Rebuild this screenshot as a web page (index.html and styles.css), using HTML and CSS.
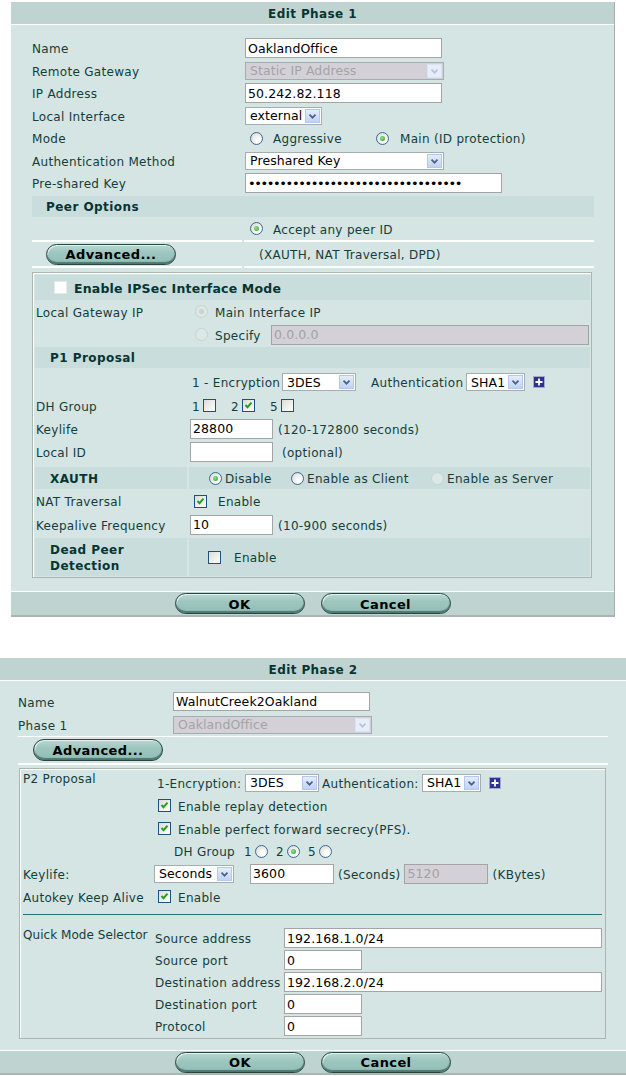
FILE: index.html
```html
<!DOCTYPE html>
<html lang="en">
<head>
    <meta charset="UTF-8">
    <meta name="viewport" content="width=device-width, initial-scale=1.0">
    <title>Auto Key (IKE)</title>
    <link rel="stylesheet" href="styles.css">
</head>
<body>
    <!-- Phase 1 -->
    <div class="panel phase1">
        <div class="panel-title">Edit Phase 1</div>
        <div class="panel-body">
            <div class="row">
                <span class="label">Name</span>
                <div class="cell"><input class="text w197" value="OaklandOffice" readonly></div>
            </div>
            <div class="row">
                <span class="label">Remote Gateway</span>
                <div class="cell">
                    <span class="select off w199"><span class="val">Static IP Address</span><span class="drop"><svg viewBox="0 0 15 14"><path d="M4 5.5l3.5 3.5 3.5-3.5"/></svg></span></span>
                </div>
            </div>
            <div class="row">
                <span class="label">IP Address</span>
                <div class="cell"><input class="text w197" value="50.242.82.118" readonly></div>
            </div>
            <div class="row">
                <span class="label">Local Interface</span>
                <div class="cell">
                    <span class="select w77"><span class="val">external</span><span class="drop"><svg viewBox="0 0 15 14"><path d="M4 5.5l3.5 3.5 3.5-3.5"/></svg></span></span>
                </div>
            </div>
            <div class="row">
                <span class="label">Mode</span>
                <div class="cell mode">
                    <span class="opt first"><span class="radio"></span><span class="txt">Aggressive</span></span>
                    <span class="opt"><span class="radio on"></span><span class="txt">Main (ID protection)</span></span>
                </div>
            </div>
            <div class="row">
                <span class="label">Authentication Method</span>
                <div class="cell">
                    <span class="select w199"><span class="val">Preshared Key</span><span class="drop"><svg viewBox="0 0 15 14"><path d="M4 5.5l3.5 3.5 3.5-3.5"/></svg></span></span>
                </div>
            </div>
            <div class="row">
                <span class="label">Pre-shared Key</span>
                <div class="cell"><input class="text w257 psk" type="password" value="oaklandofficepresharedkey123456789" readonly></div>
            </div>

            <div class="bar peer-bar">Peer Options</div>
            <div class="pair accept">
                <div></div>
                <div class="cell"><span class="radio on"></span><span class="txt">Accept any peer ID</span></div>
            </div>
            <div class="pair adv-row">
                <div class="cell"><button class="btn">Advanced...</button></div>
                <div class="cell hint"><span class="txt">(XAUTH, NAT Traversal, DPD)</span></div>
            </div>

            <div class="adv-box">
                <div class="bar big"><span class="check blank"></span>Enable IPSec Interface Mode</div>
                <div class="brow h23">
                    <span class="label">Local Gateway IP</span>
                    <div class="cell gw"><span class="radio off on"></span><span class="txt">Main Interface IP</span></div>
                </div>
                <div class="brow h23">
                    <span></span>
                    <div class="cell gw"><span class="radio off"></span><span class="spec txt">Specify</span><input class="text off w318" value="0.0.0.0" readonly></div>
                </div>
                <div class="bar p1-bar">P1 Proposal</div>
                <div class="brow enc">
                    <span></span>
                    <div class="cell">
                        <span class="enc-label txt">1 - Encryption</span>
                        <span class="select w74"><span class="val">3DES</span><span class="drop"><svg viewBox="0 0 15 14"><path d="M4 5.5l3.5 3.5 3.5-3.5"/></svg></span></span>
                        <span class="auth-label txt">Authentication</span>
                        <span class="select w59"><span class="val">SHA1</span><span class="drop"><svg viewBox="0 0 15 14"><path d="M4 5.5l3.5 3.5 3.5-3.5"/></svg></span></span>
                        <svg class="plus" viewBox="0 0 12 12"><rect x="0.5" y="0.5" width="11" height="11"/><path d="M6 2.5v7M2.5 6h7"/></svg>
                    </div>
                </div>
                <div class="brow h23">
                    <span class="label">DH Group</span>
                    <div class="cell dh">
                        <span class="num">1</span><span class="check"></span>
                        <span class="num">2</span><span class="check on"><svg viewBox="0 0 11 11"><path d="M2.5 5l2 2.2 4-4.5"/></svg></span>
                        <span class="num">5</span><span class="check"></span>
                    </div>
                </div>
                <div class="brow h23">
                    <span class="label">Keylife</span>
                    <div class="cell inp"><input class="text w83" value="28800" readonly><span class="note txt">(120-172800 seconds)</span></div>
                </div>
                <div class="brow h24">
                    <span class="label">Local ID</span>
                    <div class="cell inp"><input class="text w83" value="" readonly><span class="note wide txt">(optional)</span></div>
                </div>
                <div class="brow split xauth">
                    <div class="bar-cell">XAUTH</div>
                    <div class="bar-cell opts">
                        <span class="opt x1"><span class="radio on"></span><span class="txt">Disable</span></span>
                        <span class="opt x2"><span class="radio"></span><span class="txt">Enable as Client</span></span>
                        <span class="opt"><span class="radio off"></span><span class="txt">Enable as Server</span></span>
                    </div>
                </div>
                <div class="brow h24">
                    <span class="label">NAT Traversal</span>
                    <div class="cell nat"><span class="check on"><svg viewBox="0 0 11 11"><path d="M2.5 5l2 2.2 4-4.5"/></svg></span><span class="txt">Enable</span></div>
                </div>
                <div class="brow h23">
                    <span class="label">Keepalive Frequency</span>
                    <div class="cell inp"><input class="text w83" value="10" readonly><span class="note txt">(10-900 seconds)</span></div>
                </div>
                <div class="brow split dpd">
                    <div class="bar-cell">Dead Peer<br>Detection</div>
                    <div class="bar-cell dpd-opt"><span class="check"></span><span class="txt">Enable</span></div>
                </div>
            </div>
        </div>
        <div class="panel-foot">
            <button class="btn">OK</button>
            <button class="btn">Cancel</button>
        </div>
    </div>

    <!-- Phase 2 -->
    <div class="panel phase2">
        <div class="panel-title">Edit Phase 2</div>
        <div class="panel-body">
            <div class="row2">
                <span class="label">Name</span>
                <div class="cell"><input class="text w197 h19" value="WalnutCreek2Oakland" readonly></div>
            </div>
            <div class="row2 last">
                <span class="label">Phase 1</span>
                <div class="cell">
                    <span class="select off w199"><span class="val">OaklandOffice</span><span class="drop"><svg viewBox="0 0 15 14"><path d="M4 5.5l3.5 3.5 3.5-3.5"/></svg></span></span>
                </div>
            </div>
            <div class="adv-row2">
                <button class="btn tall">Advanced...</button>
            </div>

            <div class="adv-box box2">
                <div class="irow">
                    <span class="label top">P2 Proposal</span>
                    <div class="cell">
                        <span class="enc-label2 txt">1-Encryption:</span>
                        <span class="select w74"><span class="val">3DES</span><span class="drop"><svg viewBox="0 0 15 14"><path d="M4 5.5l3.5 3.5 3.5-3.5"/></svg></span></span>
                        <span class="auth-label2 txt">Authentication:</span>
                        <span class="select w59"><span class="val">SHA1</span><span class="drop"><svg viewBox="0 0 15 14"><path d="M4 5.5l3.5 3.5 3.5-3.5"/></svg></span></span>
                        <svg class="plus" viewBox="0 0 12 12"><rect x="0.5" y="0.5" width="11" height="11"/><path d="M6 2.5v7M2.5 6h7"/></svg>
                    </div>
                </div>
                <div class="irow">
                    <span></span>
                    <div class="cell chk"><span class="check on"><svg viewBox="0 0 11 11"><path d="M2.5 5l2 2.2 4-4.5"/></svg></span><span class="txt">Enable replay detection</span></div>
                </div>
                <div class="irow">
                    <span></span>
                    <div class="cell chk"><span class="check on"><svg viewBox="0 0 11 11"><path d="M2.5 5l2 2.2 4-4.5"/></svg></span><span class="txt">Enable perfect forward secrecy(PFS).</span></div>
                </div>
                <div class="irow h22">
                    <span></span>
                    <div class="cell dh2">
                        <span class="dh-label">DH Group</span>
                        <span class="num">1</span><span class="radio"></span>
                        <span class="num">2</span><span class="radio on"></span>
                        <span class="num">5</span><span class="radio"></span>
                    </div>
                </div>
                <div class="irow">
                    <span class="label">Keylife:</span>
                    <div class="cell">
                        <span class="select w80"><span class="val">Seconds</span><span class="drop"><svg viewBox="0 0 15 14"><path d="M4 5.5l3.5 3.5 3.5-3.5"/></svg></span></span>
                        <input class="text w84 gap16" value="3600" readonly>
                        <span class="unit txt">(Seconds)</span>
                        <input class="text off w84" value="5120" readonly>
                        <span class="unit txt">(KBytes)</span>
                    </div>
                </div>
                <div class="irow">
                    <span class="label">Autokey Keep Alive</span>
                    <div class="cell chk"><span class="check on"><svg viewBox="0 0 11 11"><path d="M2.5 5l2 2.2 4-4.5"/></svg></span><span class="txt">Enable</span></div>
                </div>
                <div class="rule"></div>
                <div class="irow qms">
                    <span class="label top">Quick Mode Selector</span>
                    <div class="qgrid">
                        <span>Source address</span><div class="cell"><input class="text w318" value="192.168.1.0/24" readonly></div>
                        <span>Source port</span><div class="cell"><input class="text w78" value="0" readonly></div>
                        <span>Destination address</span><div class="cell"><input class="text w318" value="192.168.2.0/24" readonly></div>
                        <span>Destination port</span><div class="cell"><input class="text w78" value="0" readonly></div>
                        <span>Protocol</span><div class="cell"><input class="text w78" value="0" readonly></div>
                    </div>
                </div>
            </div>
        </div>
        <div class="panel-foot short">
            <button class="btn">OK</button>
            <button class="btn">Cancel</button>
        </div>
    </div>
</body>
</html>
```

FILE: styles.css
```css
* {
    box-sizing: border-box;
}

body {
    margin: 0;
    padding-top: 2px;
    font-family: "DejaVu Sans", Verdana, sans-serif;
    font-size: 12px;
    letter-spacing: 0.3px;
    color: #143d3c;
    background: #fff;
}

/* panels */
.panel {
    background: #d5e5e3;
}

.phase1 {
    width: 604px;
    margin-left: 11px;
    border-right: 1px solid #a3afab;
}

.phase2 {
    width: 626px;
    margin-top: 41px;
}

.panel-title {
    height: 23px;
    line-height: 24px;
    background: #bfd4d1;
    border-bottom: 1px solid #fff;
    text-align: center;
    font-weight: bold;
    letter-spacing: 0.4px;
    color: #073432;
}

.phase1 .panel-body {
    padding: 12px 20px 13px 21px;
}

.phase2 .panel-body {
    padding: 9px 18px 11px 18px;
}

.panel-foot {
    height: 26px;
    border-top: 1px solid #fff;
    border-bottom: 2px solid #aab6b2;
    background: #bfd4d1;
    display: flex;
    justify-content: center;
    align-items: center;
    gap: 16px;
}

.panel-foot.short {
    height: 25px;
}

/* buttons */
.btn {
    width: 130px;
    height: 21px;
    padding: 1px 0 0;
    border: 1px solid #27463f;
    border-radius: 11px;
    background: linear-gradient(#b9d7d1, #9dc6bf 40%, #92beb6);
    box-shadow: inset 0 -2px 1px #4d7770, inset 1px 1px 0 #e4f2ef;
    font: bold 13px "DejaVu Sans", Verdana, sans-serif;
    letter-spacing: 0.4px;
    color: #000;
}

.btn.tall {
    height: 22px;
}

/* rows */
.row {
    display: grid;
    grid-template-columns: 213px 1fr;
    align-items: center;
    height: 22.5px;
}

.row2 {
    display: grid;
    grid-template-columns: 155px 1fr;
    align-items: center;
    height: 23px;
}

.row2.last {
    height: 24px;
    border-bottom: 1px solid #fff;
}

.cell {
    display: flex;
    align-items: center;
    white-space: nowrap;
}

.label {
    padding-top: 2px;
    white-space: nowrap;
}

.label.top {
    align-self: start;
    padding-top: 1px;
}

/* text beside a control sits a pixel lower than the control's middle */
.txt,
.num,
.dh-label {
    padding-top: 2px;
}

/* form controls */
.text {
    height: 20px;
    border: 1px solid #a4a4a4;
    padding: 0 2px;
    font: 12.5px "DejaVu Sans", Verdana, sans-serif;
    letter-spacing: 0.1px;
    color: #000;
    background: #fff;
    outline: none;
}

.text.h19 { height: 19px; }

.text.off {
    background: #d4d0d8;
    color: #a2a2a2;
}

.psk {
    font-size: 13px;
    letter-spacing: -1.4px;
}

.select {
    display: inline-flex;
    align-items: center;
    height: 18px;
    border: 1px solid #a5acb2;
    background: #fff;
    font-size: 12.5px;
    letter-spacing: 0.1px;
    color: #000;
}

.select .val {
    flex: 1;
    padding-left: 4px;
    white-space: nowrap;
    overflow: hidden;
}

.drop {
    display: flex;
    width: 15px;
    height: 14px;
    margin-right: 1px;
    border: 1px solid #b4c7ec;
    background: linear-gradient(#e4edfb, #c1d3f2);
}

.drop svg {
    width: 100%;
    height: 100%;
}

.drop path {
    fill: none;
    stroke: #4d6185;
    stroke-width: 2;
}

.select.off {
    background: #d4d0d8;
    color: #a4a4a4;
}

.select.off .drop {
    border-color: #d9e3f4;
    background: #e7eef9;
}

.select.off .drop path {
    stroke: #b7c3d8;
}

.w59 { width: 59px; }
.w74 { width: 74px; }
.w77 { width: 77px; }
.w78 { width: 78px; }
.w80 { width: 80px; }
.w83 { width: 83px; }
.w84 { width: 84px; }
.w197 { width: 197px; }
.w199 { width: 199px; }
.w257 { width: 257px; }
.w318 { width: 318px; }

.check {
    display: inline-block;
    flex: none;
    width: 13px;
    height: 13px;
    border: 1px solid #1c5180;
    background: linear-gradient(135deg, #dcdcd7, #fff);
}

.check svg {
    display: block;
    width: 11px;
    height: 11px;
}

.check path {
    fill: none;
    stroke: #21a121;
    stroke-width: 2;
}

.check.blank {
    border-color: #e4e9e8;
    background: #fff;
}

.radio {
    display: inline-block;
    position: relative;
    flex: none;
    width: 13px;
    height: 13px;
    border: 1px solid #3d6990;
    border-radius: 50%;
    background: radial-gradient(circle at 65% 65%, #fff 15%, #d6d6d0 90%);
}

.radio.on::after {
    content: "";
    position: absolute;
    left: 3px;
    top: 3px;
    width: 5px;
    height: 5px;
    border-radius: 50%;
    background: radial-gradient(circle at 40% 40%, #8ee88e, #1c9c1c);
}

.radio.off {
    border-color: #c8d3d2;
    background: #dce8e6;
}

.radio.off.on::after {
    background: #c9d3d2;
}

.plus {
    width: 12px;
    height: 12px;
    margin-left: 8px;
}

.plus rect {
    fill: #2e3192;
    stroke: #a3a9cc;
}

.plus path {
    stroke: #fff;
    stroke-width: 1.8;
}

/* phase 1 details */
.mode {
    padding-left: 5px;
}

.opt {
    display: inline-flex;
    align-items: center;
}

.mode .opt.first {
    width: 126px;
}

.mode .radio {
    margin-right: 10px;
}

.mode .opt + .opt .radio {
    margin-right: 11px;
}

.bar {
    background: #c8dddc;
    font-weight: bold;
    letter-spacing: 0.45px;
    color: #073432;
}

.peer-bar {
    margin-top: 1.5px;
    height: 21px;
    line-height: 22px;
    padding-left: 14px;
}

.pair {
    display: grid;
    grid-template-columns: 210px 1fr;
    column-gap: 2px;
}

.pair > div {
    border-bottom: 2px solid #fff;
}

.accept {
    height: 25px;
}

.accept .cell {
    padding-left: 6px;
}

.accept .radio {
    margin-right: 10px;
}

.adv-row {
    height: 26px;
}

.adv-row .cell {
    padding-left: 14px;
}

.adv-row .hint {
    padding-left: 15px;
}

.adv-box {
    margin: 4px 2px 0 0;
    border: 1px solid #a9b6b2;
    box-shadow: inset 1px 1px 0 #fff;
    padding: 2px 1px 1px 2px;
}

.bar.big {
    display: flex;
    align-items: center;
    height: 25px;
    padding: 1px 0 0 19px;
    font-size: 12.5px;
    letter-spacing: 0.2px;
}

.bar.big .check {
    margin: -1px 7px 0 0;
}

.p1-bar {
    margin-top: 1px;
    height: 21px;
    line-height: 22px;
    padding-left: 15px;
}

.brow {
    display: grid;
    grid-template-columns: 152px 1fr;
    column-gap: 2px;
    align-items: center;
}

.brow > .label {
    padding-left: 1px;
}

.h22 { height: 22px; }
.h23 { height: 23px; }
.h24 { height: 24px; }

.brow.enc {
    margin-top: 2px;
    height: 24px;
}

.gw {
    padding-left: 6px;
}

.gw .radio {
    margin-right: 7px;
}

.spec {
    width: 56px;
}

.enc .cell {
    padding-left: 3px;
}

.enc-label {
    width: 90px;
}

.auth-label {
    width: 110px;
    padding-left: 15px;
}

.dh {
    padding-left: 3px;
}

.dh .num {
    margin-right: 3px;
}

.dh .check {
    margin-right: 15px;
}

.inp {
    padding-left: 1px;
}

.note {
    margin-left: 5px;
}

.note.wide {
    margin-left: 9px;
}

.brow.split {
    align-items: stretch;
}

.bar-cell {
    display: flex;
    align-items: center;
    background: #c8dddc;
}

.brow.split > .bar-cell:first-child {
    padding: 2px 0 0 15px;
    font-weight: bold;
    letter-spacing: 0.45px;
    color: #073432;
}

.xauth {
    margin-top: 3px;
    height: 22px;
}

.xauth .opts {
    padding-left: 20px;
}

.xauth .radio {
    margin-right: 3px;
}

.xauth .x1 {
    width: 82px;
}

.xauth .x2 {
    width: 140px;
}

.nat {
    padding-left: 5px;
}

.nat .check {
    margin-right: 11px;
}

.dpd {
    margin-top: 2px;
    height: 38px;
}

.dpd .bar-cell:first-child {
    line-height: 16px;
}

.dpd-opt {
    padding-left: 19px;
}

.dpd-opt .check {
    margin-right: 13px;
}

/* phase 2 details */
.adv-row2 {
    display: flex;
    align-items: center;
    height: 28px;
    padding-left: 15px;
    border-bottom: 2px solid #fff;
}

.box2 {
    margin: 3px 2px 0 1px;
    padding: 2px 3px 1px 3px;
}

.irow {
    display: grid;
    grid-template-columns: 131px 1fr;
    align-items: center;
    height: 23px;
}

.irow.h22 {
    height: 22px;
}

.enc-label2 {
    width: 91px;
    padding-left: 3px;
}

.auth-label2 {
    width: 103px;
    padding-left: 3px;
}

.chk {
    padding-left: 4px;
}

.chk .check {
    margin-right: 7px;
}

.dh2 {
    padding-left: 20px;
}

.dh2 .num {
    margin: 0 3px 0 9px;
}

.dh2 .num:nth-child(4),
.dh2 .num:nth-child(6) {
    margin-left: 8px;
}

.gap16 {
    margin-left: 16px;
}

.unit {
    margin: 0 4px;
}

.rule {
    margin-top: 6px;
    height: 1px;
    background: #237676;
}

.qms {
    height: auto;
    margin-top: 12px;
    align-items: start;
}

.qms > .label {
    letter-spacing: 0.05px;
}

.qgrid {
    display: grid;
    grid-template-columns: 130px 1fr;
    grid-auto-rows: 22px;
    align-items: center;
}

.qgrid > span {
    padding: 2px 0 0 1px;
    white-space: nowrap;
}
```
